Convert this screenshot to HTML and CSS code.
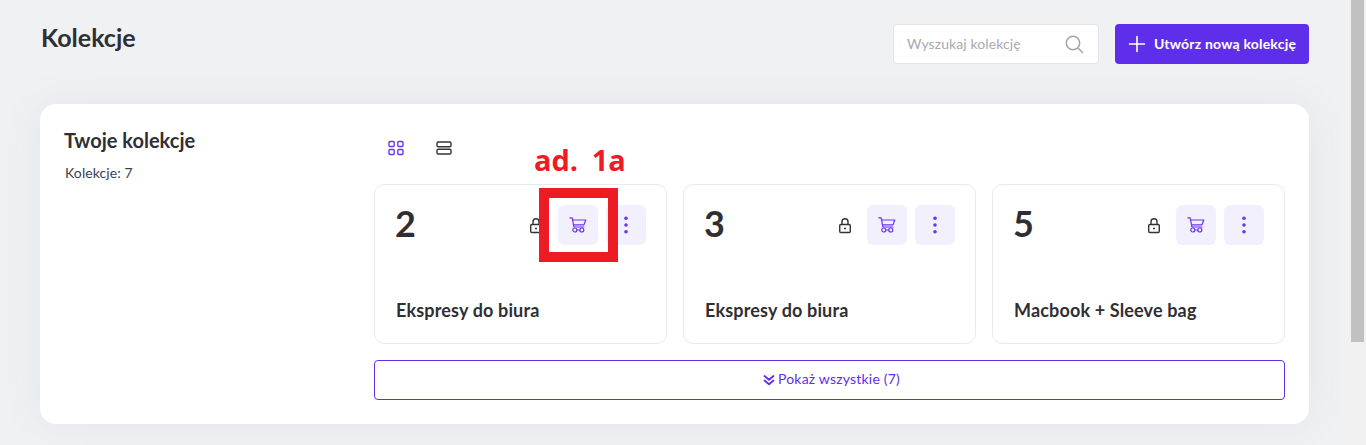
FILE: index.html
```html
<!DOCTYPE html>
<html lang="pl">
<head>
    <meta charset="UTF-8">
    <meta name="viewport" content="width=device-width, initial-scale=1.0">
    <title>Kolekcje</title>
    <link rel="stylesheet" href="styles.css">
</head>
<body>

    <div class="page">
        <!-- naglowek -->
        <div class="top-bar">
            <h1 class="page-title">Kolekcje</h1>
            <div class="top-actions">
                <div class="search-box">
                    <span class="search-text">Wyszukaj kolekcję</span>
                    <svg class="search-icon" width="20" height="20" viewBox="0 0 20 20" fill="none" stroke="#a3a3a8" stroke-width="1.5" stroke-linecap="round"><circle cx="9" cy="9" r="6.7"/><path d="M14 14l4.500 4.500"/></svg>
                </div>
                <button class="btn-new">
                    <svg width="18" height="18" viewBox="0 0 18 18" fill="none" stroke="#fff" stroke-width="1.6" stroke-linecap="round"><path d="M9 1.500v15M1.500 9h15"/></svg>
                    <span class="btn-label">Utwórz nową kolekcję</span>
                </button>
            </div>
        </div>

        <!-- kolekcje -->
        <div class="panel">
            <div class="panel-side">
                <h2 class="panel-title">Twoje kolekcje</h2>
                <p class="panel-count">Kolekcje: 7</p>
            </div>
            <div class="panel-main">
                <div class="view-switch">
                    <svg width="16" height="16" viewBox="0 0 16 16" fill="none" stroke="#6a35f0" stroke-width="1.4"><rect x="1" y="1.500" width="5.200" height="5" rx="1"/><rect x="9.800" y="1.500" width="5.200" height="5" rx="1"/><rect x="1" y="9.500" width="5.200" height="5" rx="1"/><rect x="9.800" y="9.500" width="5.200" height="5" rx="1"/></svg>
                    <svg width="16" height="16" viewBox="0 0 16 16" fill="none" stroke="#333" stroke-width="1.4"><rect x="1" y="2" width="14" height="4.800" rx="1.200"/><rect x="1" y="9.200" width="14" height="4.800" rx="1.200"/></svg>
                </div>

                <div class="tiles">
                    <div class="tile">
                        <div class="tile-top">
                            <span class="tile-number">2</span>
                            <svg class="lock" width="14" height="16" viewBox="0 0 14 16" fill="none" stroke="#333" stroke-width="1.4"><rect x="1.700" y="6.500" width="10.600" height="8" rx="1.200"/><path d="M4 6.500V3.800a3 3 0 0 1 6 0v2.700"/><circle cx="7" cy="10.500" r="1" fill="#333" stroke="none"/></svg>
                            <span class="tile-btn"><svg width="18" height="18" viewBox="0 0 18 18" fill="none" stroke="#6a35f0" stroke-width="1.200" stroke-linecap="round" stroke-linejoin="round"><path d="M.8 1.800h2.400l1.700 9.200h10"/><path d="M3.600 4h13.200l-1.800 4.800H4.500"/><circle cx="5.800" cy="14" r="2"/><circle cx="12.800" cy="14" r="2"/><path d="M7.800 14h3"/></svg></span>
                            <span class="tile-btn"><svg width="4" height="18" viewBox="0 0 4 18" fill="#6a35f0"><circle cx="2" cy="2.200" r="1.800"/><circle cx="2" cy="9" r="1.800"/><circle cx="2" cy="15.800" r="1.800"/></svg></span>
                        </div>
                        <div class="tile-name">Ekspresy do biura</div>
                    </div>
                    <div class="tile">
                        <div class="tile-top">
                            <span class="tile-number">3</span>
                            <svg class="lock" width="14" height="16" viewBox="0 0 14 16" fill="none" stroke="#333" stroke-width="1.4"><rect x="1.700" y="6.500" width="10.600" height="8" rx="1.200"/><path d="M4 6.500V3.800a3 3 0 0 1 6 0v2.700"/><circle cx="7" cy="10.500" r="1" fill="#333" stroke="none"/></svg>
                            <span class="tile-btn"><svg width="18" height="18" viewBox="0 0 18 18" fill="none" stroke="#6a35f0" stroke-width="1.200" stroke-linecap="round" stroke-linejoin="round"><path d="M.8 1.800h2.400l1.700 9.200h10"/><path d="M3.600 4h13.200l-1.800 4.800H4.500"/><circle cx="5.800" cy="14" r="2"/><circle cx="12.800" cy="14" r="2"/><path d="M7.800 14h3"/></svg></span>
                            <span class="tile-btn"><svg width="4" height="18" viewBox="0 0 4 18" fill="#6a35f0"><circle cx="2" cy="2.200" r="1.800"/><circle cx="2" cy="9" r="1.800"/><circle cx="2" cy="15.800" r="1.800"/></svg></span>
                        </div>
                        <div class="tile-name">Ekspresy do biura</div>
                    </div>
                    <div class="tile">
                        <div class="tile-top">
                            <span class="tile-number">5</span>
                            <svg class="lock" width="14" height="16" viewBox="0 0 14 16" fill="none" stroke="#333" stroke-width="1.4"><rect x="1.700" y="6.500" width="10.600" height="8" rx="1.200"/><path d="M4 6.500V3.800a3 3 0 0 1 6 0v2.700"/><circle cx="7" cy="10.500" r="1" fill="#333" stroke="none"/></svg>
                            <span class="tile-btn"><svg width="18" height="18" viewBox="0 0 18 18" fill="none" stroke="#6a35f0" stroke-width="1.200" stroke-linecap="round" stroke-linejoin="round"><path d="M.8 1.800h2.400l1.700 9.200h10"/><path d="M3.600 4h13.200l-1.800 4.800H4.500"/><circle cx="5.800" cy="14" r="2"/><circle cx="12.800" cy="14" r="2"/><path d="M7.800 14h3"/></svg></span>
                            <span class="tile-btn"><svg width="4" height="18" viewBox="0 0 4 18" fill="#6a35f0"><circle cx="2" cy="2.200" r="1.800"/><circle cx="2" cy="9" r="1.800"/><circle cx="2" cy="15.800" r="1.800"/></svg></span>
                        </div>
                        <div class="tile-name">Macbook + Sleeve bag</div>
                    </div>
                </div>

                <button class="btn-all">
                    <svg width="12" height="12" viewBox="0 0 12 12" fill="none" stroke="#5f2eea" stroke-width="1.800" stroke-linecap="round" stroke-linejoin="round"><path d="M1.500 2l4.500 3.800L10.500 2"/><path d="M1.500 6.500L6 10.300l4.500-3.800"/></svg>
                    <span class="btn-all-label">Pokaż wszystkie (7)</span>
                </button>

                <!-- adnotacja -->
                <span class="note-label">ad. 1a</span>
                <span class="note-box"></span>
            </div>
        </div>
    </div>

    <div class="scrollbar"><div class="scroll-thumb"></div></div>

</body>
</html>
```

FILE: styles.css
```css
html, body {
    height: 100%;
}
body {
    margin: 0;
    display: flex;
    overflow: hidden;
    background: #f0f1f3;
    color: #2f2f33;
    font-family: Lato, "Open Sans", sans-serif;
}
.page {
    flex: 1;
    min-width: 0;
    padding: 24px 40px 0;
}
.scrollbar {
    width: 17px;
    padding: 0 2px;
    box-sizing: border-box;
    background: #f1f1f1;
}
.scroll-thumb {
    height: 342px;
    background: #c1c1c1;
}
.top-bar {
    display: flex;
    justify-content: space-between;
    align-items: flex-start;
    margin-bottom: 40px;
}
.page-title {
    margin: 0 0 0 1px;
    font-size: 25px;
    line-height: 26px;
    font-weight: 700;
}
.top-actions {
    display: flex;
    gap: 16px;
}
.search-box {
    box-sizing: border-box;
    width: 206px;
    height: 40px;
    padding: 0 14px 0 13px;
    display: flex;
    align-items: center;
    justify-content: space-between;
    background: #fff;
    border: 1px solid #e2e3e6;
    border-radius: 4px;
}
.search-text {
    padding-bottom: 2px;
    font-size: 14px;
    letter-spacing: 0.1px;
    color: #a9a9ae;
}
.btn-label {
    padding-bottom: 2px;
}
.btn-new {
    width: 194px;
    height: 40px;
    display: flex;
    align-items: center;
    justify-content: center;
    gap: 8px;
    background: #5f2eea;
    color: #fff;
    border: 0;
    border-radius: 4px;
    font-family: inherit;
    font-size: 14px;
    font-weight: 700;
    letter-spacing: 0.2px;
}

.panel {
    display: grid;
    grid-template-columns: 310px 1fr;
    padding: 24px;
    background: #fff;
    border-radius: 16px;
    box-shadow: 0 0 40px rgba(90, 95, 110, 0.08);
}
.panel-title {
    margin: 0;
    font-size: 20px;
    line-height: 24px;
    font-weight: 700;
}
.panel-count {
    margin: 12px 0 0 1px;
    font-size: 14px;
    line-height: 18px;
    letter-spacing: 0.1px;
    color: #3c4256;
}
.panel-main {
    position: relative;
    min-width: 0;
}
.view-switch {
    display: flex;
    gap: 32px;
    padding: 12px 14px;
    height: 16px;
    margin-bottom: 16px;
}
.tiles {
    display: grid;
    grid-template-columns: repeat(3, minmax(0, 1fr));
    gap: 16px;
}
.tile {
    box-sizing: border-box;
    height: 160px;
    padding: 20px;
    display: flex;
    flex-direction: column;
    justify-content: space-between;
    border: 1px solid #e9eaec;
    border-radius: 10px;
}
.tile-top {
    display: flex;
    align-items: center;
    gap: 8px;
}
.tile-number {
    margin: 0 auto 4px 0;
    font-size: 36px;
    line-height: 36px;
    font-weight: 700;
}
.lock {
    margin: 2px 7px 0 0;
}
.tile-btn {
    width: 40px;
    height: 40px;
    display: flex;
    align-items: center;
    justify-content: center;
    background: #f3f0fd;
    border-radius: 6px;
}
.tile-name {
    margin: 0 0 2px 1px;
    font-size: 18px;
    line-height: 22px;
    letter-spacing: 0.15px;
    font-weight: 700;
}
.btn-all {
    width: 100%;
    height: 40px;
    margin-top: 16px;
    padding: 0 0 0 4px;
    display: flex;
    align-items: center;
    justify-content: center;
    gap: 3px;
    background: #fff;
    color: #5f2eea;
    border: 1px solid #5f2eea;
    border-radius: 4px;
    font-family: inherit;
    font-size: 14px;
    letter-spacing: 0.2px;
}
.btn-all-label {
    padding-bottom: 4px;
}

.note-label {
    position: absolute;
    left: 160px;
    top: 14px;
    color: #ed1c24;
    font-family: "Open Sans", sans-serif;
    font-size: 29px;
    font-weight: 700;
    word-spacing: 6px;
    line-height: 36px;
    white-space: nowrap;
}
.note-box {
    position: absolute;
    left: 165px;
    top: 60px;
    box-sizing: border-box;
    width: 79px;
    height: 74px;
    border: 10px solid #ed1c24;
}
```
